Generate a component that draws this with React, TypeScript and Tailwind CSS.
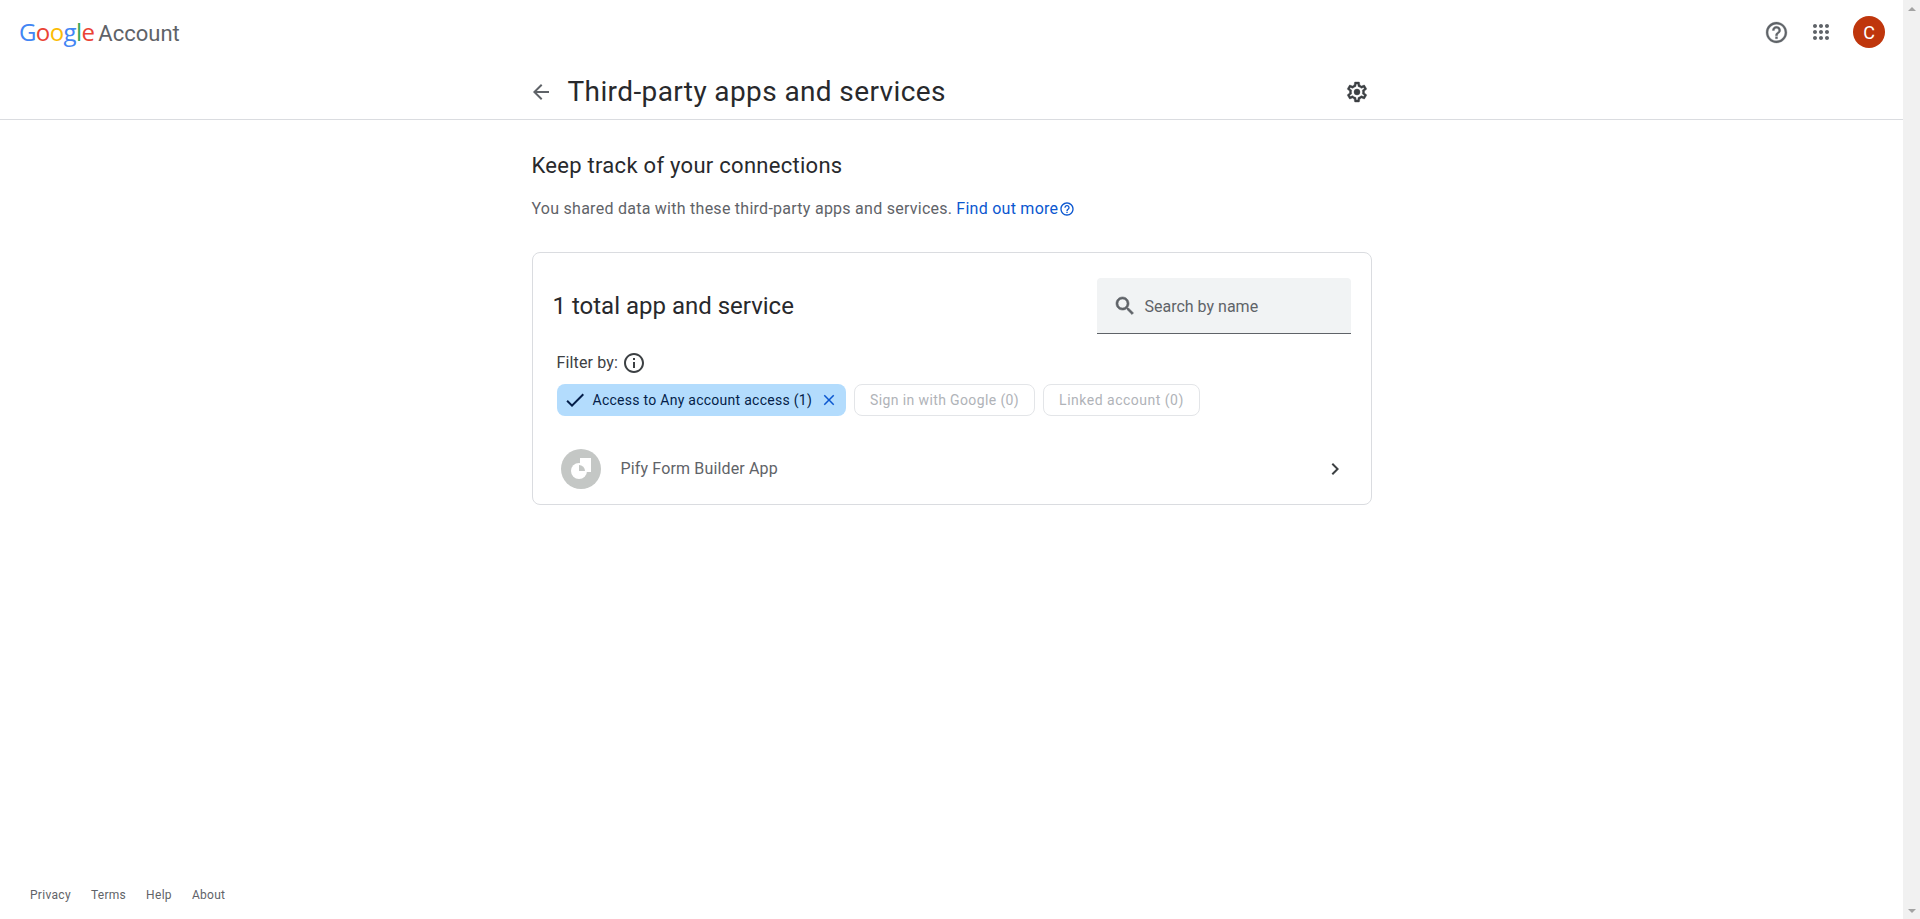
const roboto = "font-['Roboto',sans-serif]";

function GoogleLogo() {
  return (
    <div className="flex items-baseline font-['Open_Sans',sans-serif] text-[24px] font-medium leading-none tracking-[-0.6px] text-[#5f6368]">
      <span className="text-[#4285f4]">G</span>
      <span className="text-[#ea4335]">o</span>
      <span className="text-[#fbbc05]">o</span>
      <span className="text-[#4285f4]">g</span>
      <span className="text-[#34a853]">l</span>
      <span className="text-[#ea4335]">e</span>
      <span className="ml-[4px] font-['Roboto',sans-serif] text-[22px] font-normal tracking-normal">Account</span>
    </div>
  );
}

function HelpIcon({ size, color, stroke = 0 }: { size: number; color: string; stroke?: number }) {
  return (
    <svg width={size} height={size} viewBox="0 0 24 24" fill={color} stroke={color} strokeWidth={stroke}>
      <path d="M11 18h2v-2h-2v2zm1-16C6.48 2 2 6.48 2 12s4.48 10 10 10 10-4.48 10-10S17.52 2 12 2zm0 18c-4.41 0-8-3.59-8-8s3.59-8 8-8 8 3.59 8 8-3.59 8-8 8zm0-14c-2.21 0-4 1.79-4 4h2c0-1.1.9-2 2-2s2 .9 2 2c0 2-3 1.75-3 5h2c0-2.25 3-2.5 3-5 0-2.21-1.79-4-4-4z" />
    </svg>
  );
}

function AppsIcon() {
  return (
    <svg width="24" height="24" viewBox="0 0 24 24" fill="#5f6368">
      <path d="M6 8c1.1 0 2-.9 2-2s-.9-2-2-2-2 .9-2 2 .9 2 2 2zm6 12c1.1 0 2-.9 2-2s-.9-2-2-2-2 .9-2 2 .9 2 2 2zm-6 0c1.1 0 2-.9 2-2s-.9-2-2-2-2 .9-2 2 .9 2 2 2zm0-6c1.1 0 2-.9 2-2s-.9-2-2-2-2 .9-2 2 .9 2 2 2zm6 0c1.1 0 2-.9 2-2s-.9-2-2-2-2 .9-2 2 .9 2 2 2zm4-8c0 1.1.9 2 2 2s2-.9 2-2-.9-2-2-2-2 .9-2 2zm-4 2c1.1 0 2-.9 2-2s-.9-2-2-2-2 .9-2 2 .9 2 2 2zm6 6c1.1 0 2-.9 2-2s-.9-2-2-2-2 .9-2 2 .9 2 2 2zm0 6c1.1 0 2-.9 2-2s-.9-2-2-2-2 .9-2 2 .9 2 2 2z" />
    </svg>
  );
}

function GearIcon() {
  return (
    <svg width="24" height="24" viewBox="0 0 24 24" fill="#3c4043" stroke="#3c4043" strokeWidth="0.4">
      <path d="M19.43 12.98c.04-.32.07-.64.07-.98 0-.34-.03-.66-.07-.98l2.11-1.65c.19-.15.24-.42.12-.64l-2-3.46c-.09-.16-.26-.25-.44-.25-.06 0-.12.01-.17.03l-2.49 1c-.52-.4-1.08-.73-1.69-.98l-.38-2.65C14.46 2.18 14.25 2 14 2h-4c-.25 0-.46.18-.49.42l-.38 2.65c-.61.25-1.17.59-1.69.98l-2.49-1c-.06-.02-.12-.03-.18-.03-.17 0-.34.09-.43.25l-2 3.46c-.13.22-.07.49.12.64l2.11 1.65c-.04.32-.07.65-.07.98 0 .33.03.66.07.98l-2.11 1.65c-.19.15-.24.42-.12.64l2 3.46c.09.16.26.25.44.25.06 0 .12-.01.17-.03l2.49-1c.52.4 1.08.73 1.69.98l.38 2.65c.03.24.24.42.49.42h4c.25 0 .46-.18.49-.42l.38-2.65c.61-.25 1.17-.59 1.69-.98l2.49 1c.06.02.12.03.18.03.17 0 .34-.09.43-.25l2-3.46c.12-.22.07-.49-.12-.64l-2.11-1.65zm-1.98-1.71c.04.31.05.52.05.73 0 .21-.02.43-.05.73l-.14 1.13.89.7 1.08.84-.7 1.21-1.27-.51-1.04-.42-.9.68c-.43.32-.84.56-1.25.73l-1.06.43-.16 1.13-.2 1.35h-1.4l-.19-1.35-.16-1.13-1.06-.43c-.43-.18-.83-.41-1.23-.71l-.91-.7-1.06.43-1.27.51-.7-1.21 1.08-.84.89-.7-.14-1.13c-.03-.31-.05-.54-.05-.74s.02-.43.05-.73l.14-1.13-.89-.7-1.08-.84.7-1.21 1.27.51 1.04.42.9-.68c.43-.32.84-.56 1.25-.73l1.06-.43.16-1.13.2-1.35h1.39l.19 1.35.16 1.13 1.06.43c.43.18.83.41 1.23.71l.91.7 1.06-.43 1.27-.51.7 1.21-1.07.85-.89.7.14 1.13z" />
      <circle cx="12" cy="12" r="3" />
    </svg>
  );
}

function BackArrow() {
  return (
    <svg width="24" height="24" viewBox="0 0 24 24" fill="#5f6368">
      <path d="M20 11H7.83l5.59-5.59L12 4l-8 8 8 8 1.41-1.41L7.83 13H20v-2z" />
    </svg>
  );
}

function SearchIcon() {
  return (
    <svg width="24" height="24" viewBox="0 0 24 24" fill="#5f6368" stroke="#5f6368" strokeWidth="0.6">
      <path d="M15.5 14h-.79l-.28-.27C15.41 12.59 16 11.11 16 9.5 16 5.91 13.09 3 9.5 3S3 5.91 3 9.5 5.91 16 9.5 16c1.61 0 3.09-.59 4.23-1.57l.27.28v.79l5 4.99L20.49 19l-4.99-5zm-6 0C7.01 14 5 11.99 5 9.5S7.01 5 9.5 5 14 7.01 14 9.5 11.99 14 9.5 14z" />
    </svg>
  );
}

function InfoIcon() {
  return (
    <svg width="24" height="24" viewBox="0 0 24 24" fill="#3c4043">
      <path d="M11 7h2v2h-2V7zm0 4h2v6h-2v-6zm1-9C6.48 2 2 6.48 2 12s4.48 10 10 10 10-4.48 10-10S17.52 2 12 2zm0 18c-4.41 0-8-3.59-8-8s3.59-8 8-8 8 3.59 8 8-3.59 8-8 8z" />
    </svg>
  );
}

function AppBadge() {
  return (
    <div className="h-10 w-10 shrink-0 rounded-full bg-[#c4c7c5]">
      <svg width="40" height="40" viewBox="0 0 40 40">
        <rect x="19" y="9" width="11" height="14" fill="#ffffff" />
        <circle cx="18" cy="22" r="8" fill="#ffffff" />
        <path d="M18 22V16A6 6 0 0 1 24 22Z" fill="#c4c7c5" />
      </svg>
    </div>
  );
}

export default function App() {
  return (
    <div className={`flex h-[919px] w-full overflow-hidden bg-white ${roboto}`}>
      <div className="flex min-w-0 flex-1 flex-col">
        <header className="flex h-16 items-center justify-between pl-[19px] pr-[18px]">
          <GoogleLogo />
          <div className="flex items-center gap-5">
            <HelpIcon size={25} color="#5f6368" stroke={0.3} />
            <AppsIcon />
            <div className="flex h-8 w-8 items-center justify-center rounded-full bg-[#bf360c] text-[18px] text-white">C</div>
          </div>
        </header>

        <div className="border-b border-[#dadce0]">
          <div className="mx-auto flex h-[55px] w-[840px] items-center">
            <div className="-ml-[3px]"><BackArrow /></div>
            <h1 className="ml-[15px] flex-1 text-[28px] font-normal leading-9 tracking-[0.39px] text-[#28292c]">Third-party apps and services</h1>
            <div className="mr-[3px]"><GearIcon /></div>
          </div>
        </div>

        <main className="mx-auto flex w-[840px] flex-1 flex-col">
          <h2 className="mt-[32px] text-[22px] font-normal leading-7 tracking-[0.28px] text-[#28292c]">Keep track of your connections</h2>
          <p className="mt-[17px] flex items-center text-[16px] leading-6 tracking-[0.26px] text-[#5f6368]">
            You shared data with these third-party apps and services.
            <a className="ml-[4px] text-[#0b57d0]">Find out more</a>
            <span className="ml-[1px]"><HelpIcon size={16} color="#0b57d0" /></span>
          </p>

          <section className="mt-[31px] rounded-[8px] border border-[#dadce0] pb-[7px] pl-[20px] pr-[20px] pt-[25px]">
            <div className="flex items-start justify-between">
              <h3 className="mt-[12px] text-[24px] font-normal leading-8 text-[#28292c]">1 total app and service</h3>
              <div className="flex h-[56px] w-[254px] items-center rounded-t-[4px] border-b border-[#5f6368] bg-[#f1f3f4] pl-[16px] text-[16px] text-[#5f6368]">
                <SearchIcon />
                <span className="ml-[8px] translate-y-px">Search by name</span>
              </div>
            </div>

            <div className="ml-[4px] mt-[17px] flex items-center text-[16px] leading-6 tracking-[0.15px] text-[#3c4043]">
              Filter by:
              <span className="ml-[4px]"><InfoIcon /></span>
            </div>

            <div className="ml-[4px] mt-[9px] flex items-center gap-2">
              <div className="flex h-8 items-center rounded-[8px] bg-[#b3dcfd] pl-[6px] pr-[8px] text-[14px] tracking-[0.27px] text-[#041e49]">
                <svg width="24" height="24" viewBox="0 0 24 24" fill="#041e49"><path d="M9 16.17 4.83 12l-1.42 1.41L9 19 21 7l-1.41-1.41z" /></svg>
                <span className="ml-[6px]">Access to Any account access (1)</span>
                <svg className="ml-[8px]" width="18" height="18" viewBox="0 0 24 24" fill="#0b57d0"><path d="M19 6.41 17.59 5 12 10.59 6.41 5 5 6.41 10.59 12 5 17.59 6.41 19 12 13.41 17.59 19 19 17.59 13.41 12z" /></svg>
              </div>
              <div className="flex h-8 items-center rounded-[8px] border border-[#e3e5e8] px-[15px] text-[14px] tracking-[0.38px] text-[#b0b3b8]">Sign in with Google (0)</div>
              <div className="flex h-8 items-center rounded-[8px] border border-[#e3e5e8] px-[15px] text-[14px] tracking-[0.5px] text-[#b0b3b8]">Linked account (0)</div>
            </div>

            <div className="mt-[25px] flex h-[56px] items-center pl-[8px] pr-[4px]">
              <AppBadge />
              <span className="ml-[20px] flex-1 text-[16px] tracking-[0.15px] text-[#5f6368]">Pify Form Builder App</span>
              <svg width="24" height="24" viewBox="0 0 24 24" fill="#3c4043"><path d="M10 6 8.59 7.41 13.17 12l-4.58 4.59L10 18l6-6z" /></svg>
            </div>
          </section>
        </main>

        <footer className="flex h-[32px] items-start gap-5 pl-[30px] text-[12px] leading-4 tracking-[0.3px] text-[#5f6368]">
          <span>Privacy</span>
          <span>Terms</span>
          <span>Help</span>
          <span>About</span>
        </footer>
      </div>

      <div className="flex w-[17px] shrink-0 flex-col justify-between bg-[#f1f1f1]">
        <div className="flex h-[17px] items-center justify-center">
          <div className="h-0 w-0 border-x-[4px] border-b-[4px] border-x-transparent border-b-[#a3a3a3]" />
        </div>
        <div className="flex h-[17px] items-center justify-center">
          <div className="h-0 w-0 border-x-[4px] border-t-[4px] border-x-transparent border-t-[#a3a3a3]" />
        </div>
      </div>
    </div>
  );
}
